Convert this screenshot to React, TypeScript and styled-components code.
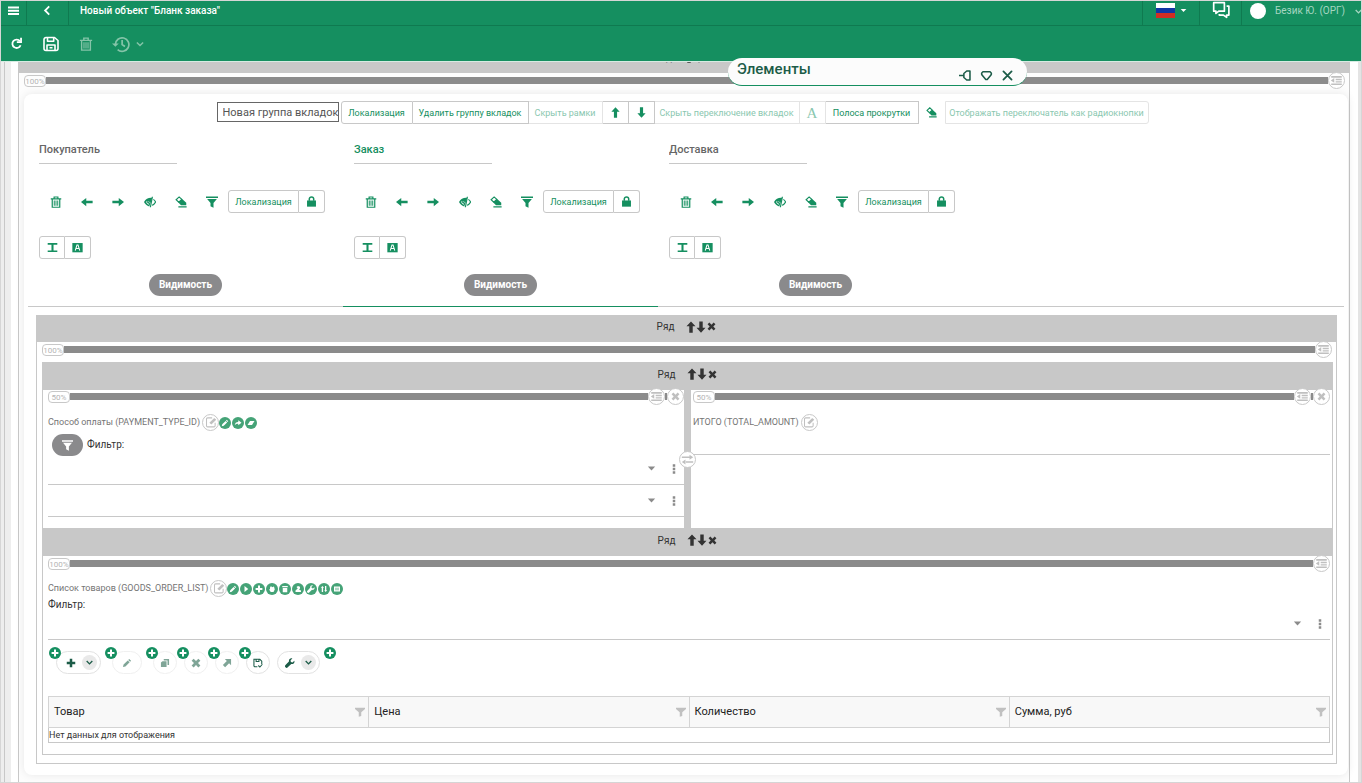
import React from "react";
import styled, { createGlobalStyle, css } from "styled-components";

const c = {
  green: "#158f60",
  greenDark: "#0f7a50",
  dot: "#45a377",
  deep: "#1c5c48",
  line: "#c8c8c8",
  bar: "#8b8b8b",
  text: "#333",
  muted: "#757575",
};

const GlobalStyle = createGlobalStyle`
  * { box-sizing: border-box; }
  body { margin: 0; background: #fff; color: ${c.text}; font: 10px/14px Roboto, "Noto Sans", sans-serif; }
  button, input { font: inherit; color: inherit; margin: 0; padding: 0; border: 0; background: none; border-radius: 0; }
  svg { display: block; flex: none; }
`;

/* ---------- icons ---------- */

const paths: Record<string, React.ReactNode> = {
  menu: <path d="M0 2h16v3H0zM0 6.800h16v3H0zM0 11.600h16v3H0z" />,
  back: <path d="M10.500 2L4.500 8l6 6" fill="none" stroke="currentColor" strokeWidth="2.600" />,
  refresh: (
    <g fill="none" stroke="currentColor" strokeWidth="2.200">
      <path d="M12.300 5.200A5.200 5.200 0 1 0 13 10.200" />
      <path d="M13.600 1v5.200H8.400" />
    </g>
  ),
  save: (
    <g fill="none" stroke="currentColor" strokeWidth="1.600" strokeLinejoin="round">
      <path d="M1 3.500a2 2 0 0 1 2-2h8.500L15 4.500v8a2 2 0 0 1-2 2H3a2 2 0 0 1-2-2z" />
      <path d="M4.500 1.500v3.700h6.200V1.500M4 14.500V9h8v5.500M6.500 11.700h3" />
    </g>
  ),
  trash: (
    <g fill="none" stroke="currentColor">
      <path d="M1 3.800h14M5.500 3.500V1.300h5v2M3 4v11h10V4" strokeWidth="1.600" />
      <path d="M5.700 6v7M8 6v7M10.300 6v7" strokeWidth="1.300" />
    </g>
  ),
  history: (
    <g fill="none" stroke="currentColor" strokeWidth="1.500">
      <path d="M3 8.500a6 6 0 1 1 2 4.500M9 4.500V8.500l2.500 1.700" />
      <path d="M0 7.500h6L3 10.500z" fill="currentColor" stroke="none" />
    </g>
  ),
  chevron: <path d="M3 5.500l5 5 5-5" fill="none" stroke="currentColor" strokeWidth="2.400" />,
  caret: <path d="M1.500 4.500h13L8 11.500z" />,
  chat: (
    <g fill="none" stroke="currentColor" strokeWidth="1.500" strokeLinejoin="round">
      <path d="M1.500 1.500h9.500v7.500H6L3.500 11V9h-2z" />
      <path d="M13 4.500h2v8h-2v2l-2.800-2H6.500v-1" />
    </g>
  ),
  pin: <path d="M0 8h6M6 5.500l3.500-3h4v11h-4L6 10.500z" fill="none" stroke="currentColor" strokeWidth="1.900" strokeLinejoin="round" />,
  heart: <path d="M3.500 3.500h9c1.500 1 1.800 2.700 1 4L8.900 13H7.100L2.500 7.500c-.8-1.300-.5-3 1-4z" fill="none" stroke="currentColor" strokeWidth="1.900" strokeLinejoin="round" />,
  close: <path d="M3 3l10 10M13 3L3 13" fill="none" stroke="currentColor" strokeWidth="2.200" strokeLinecap="round" />,
  up: <path d="M8 .500l6 6.500H10.300v8.500H5.700V7H2z" />,
  down: <path d="M8 15.500l6-6.500H10.300V.500H5.700V9H2z" />,
  left: <path d="M0 8l7-5.500v3.700h8.500v3.600H7v3.700z" />,
  right: <path d="M16 8L9 2.500v3.700H.500v3.600H9v3.700z" />,
  cross: <path d="M4.200 1L8 4.800 11.800 1 15 4.200 11.200 8l3.800 3.800-3.200 3.200L8 11.200 4.200 15 1 11.800 4.800 8 1 4.200z" />,
  eye: (
    <g>
      <path d="M0 8c2.500-4.300 6-6 11-5.500L7 14C3.800 13 1.500 11 0 8z" />
      <path d="M3.800 7a2.800 2.800 0 0 0 3 3.800M6 7.500l1.500 1" fill="none" stroke="#fff" strokeWidth="1.200" />
      <path d="M11.200 1L8.500 15M12.500 4.500C14 5.500 15 6.800 15.500 8c-1 2-2.500 3.500-4.500 4.500" fill="none" stroke="currentColor" strokeWidth="1.600" />
    </g>
  ),
  eraser: (
    <g>
      <path d="M1.500 5L5.500 1.200l3.500 3.300L5 8.300z" fill="none" stroke="currentColor" strokeWidth="1.500" />
      <path d="M4.500 8.700l5-4.700L15 9v3.300H8zM4.500 13.500h11v1.800h-11z" />
    </g>
  ),
  filter: <path d="M0 .500h16v2H0zM1.500 4h13L10 9.300v6.200L6 13.500V9.300z" />,
  funnel: <path d="M0 1h16v2L10 8.500v5.800L6 15.500V8.500L0 3z" />,
  lock: (
    <g>
      <path d="M1.500 6.500h13v9h-13z" />
      <path d="M4.800 7V4.500a3.200 3.200 0 0 1 6.400 0V7" fill="none" stroke="currentColor" strokeWidth="2.200" />
    </g>
  ),
  caption: <path d="M1 1.500h14v2.600H9.500v8.200H15v2.400H1v-2.400h5.500V4.100H1z" />,
  letter: (
    <g>
      <path d="M.500 1.500h15v13.500H.500z" />
      <path d="M4.700 12.500L7.200 4.500h1.600l2.500 8M5.800 9.500h4.400" fill="none" stroke="#fff" strokeWidth="1.500" />
    </g>
  ),
  outdent: (
    <g>
      <path d="M1.500 2.500h13v2h-13zM7 5.800h7.500v1.900H7zM7 8.800h7.500v1.700H7zM1.500 11.700h13v1.700h-13z" />
      <path d="M1 7.900l4.200-3v6z" />
    </g>
  ),
  edit: (
    <g fill="none" stroke="currentColor" strokeWidth="1.400">
      <path d="M9.500 2.500H3.500A1.500 1.500 0 0 0 2 4v9a1.500 1.500 0 0 0 1.500 1.500h8.500a1.500 1.500 0 0 0 1.500-1.500V9" />
      <path d="M6.500 9.800l6.500-6.500M7.800 10.800l6.500-6.500" strokeWidth="1.900" />
    </g>
  ),
  swap: <path d="M1 4.200h10v1.800H1zM10.500 2L15 5.100l-4.500 3.100zM5 10.100h10v1.800H5zM5.500 7.900L1 11l4.500 3.100z" />,
  pencil: <path d="M1.500 14.500l1-4L9.200 3.800l3 3-6.700 6.700zM10 3l1.500-1.500 3 3L13 6z" />,
  share: <path d="M1.500 12.500c.3-4.500 3-6.500 7-6.700V2.500L15 7.500l-6.500 5V9.300c-3-.1-5 .7-7 3.200z" />,
  rubber: <path d="M1 12l5-8h9l-5 8z" />,
  play: <path d="M5 2l7.500 6L5 14z" />,
  plus: <path d="M6 1.200h4V6h4.800v4H10v4.800H6V10H1.200V6H6z" />,
  hand: <path d="M4 5l2-3 2 2.500L12 3l1.500 6-2.500 5H5.500L2 9l2-.5z" />,
  bin: <path d="M2.500 2h11v2.500h-11zM3.500 6h9v8.500h-9z" />,
  stamp: <path d="M3 11l4.500-4L5 4l3-2 4 1.500V7l-2 2 4 2v3H3z" />,
  wrench: <path d="M14.900 4.500L12 7 9.400 6.200 8.900 3.500 11.800.800C8.800-.300 5.800 2.200 6.300 5.500L.800 11.300a2.400 2.400 0 0 0 3.600 3.600L10 9.700c3.200.6 6-1.900 4.900-5.200z" />,
  sort: <path d="M3.500 14V5.500H1.500L5 2l3 3.500H6.200V14zM10 2h2.600v8.500h2L11.300 14 8.500 10.500H10z" />,
  card: (
    <g>
      <path d="M2 3h12v10H2z" />
      <path d="M4 6.500h8M4 9.500h8" stroke={c.dot} strokeWidth="1.200" />
    </g>
  ),
  copy: <path d="M6 1.500h8.500V11H12V4H6zM1.500 7L4 5h6.500v9.500h-9z" />,
  northeast: <path d="M4.500 1.500h10v10l-3.200-3.200L5 14.600 1.400 11 7.700 4.700z" />,
  savecheck: (
    <g fill="none" stroke="currentColor" strokeWidth="1.700">
      <path d="M7 14H2.500L1.500 13V2h9.500l3 3v4.500M5 2v3.500h4.500V2M8.500 12l2.500 2.500 4-4.500" />
    </g>
  ),
  more: <path d="M6 .500h4v4H6zM6 6h4v4H6zM6 11.500h4v4H6z" />,
};

const Icon = ({ name, size = 12 }: { name: string; size?: number }) => (
  <svg width={size} height={size} viewBox="0 0 16 16" fill="currentColor" aria-hidden="true">
    {paths[name]}
  </svg>
);

/* ---------- page frame ---------- */

const Page = styled.div`
  position: relative;
  display: flex;
  flex-direction: column;
  min-height: 100vh;
  border: 1px solid #d6d6d6;
`;

const TopBar = styled.header`
  display: flex;
  height: 25px;
  background: ${c.green};
  border-bottom: 1px solid ${c.greenDark};
  color: #fff;
`;

const TopCell = styled.div<{ $w: number; $side?: "left" | "right" }>`
  display: flex;
  justify-content: center;
  align-items: center;
  width: ${(p) => p.$w}px;
  height: 24px;
  padding-bottom: 6px;
  ${(p) => (p.$side === "left" ? css`border-left` : css`border-right`)}: 1px solid ${c.greenDark};
`;

const PlainButton = styled.button`
  display: flex;
  align-items: center;
  justify-content: center;
  gap: 5px;
  cursor: pointer;
`;

const PageTitle = styled.h1`
  flex: 1;
  margin: 0;
  padding: 2px 11px 0;
  font-size: 10px;
  line-height: 16px;
  font-weight: 500;
  white-space: nowrap;
`;

const Flag = styled.span`
  width: 19px;
  height: 15px;
  background: linear-gradient(#fff 0 5px, #1037a4 5px 10px, #d12d23 10px);
`;

const UserCell = styled.button`
  display: flex;
  align-items: center;
  gap: 9px;
  width: 120px;
  height: 24px;
  padding: 0 0 4px 8px;
  border-left: 1px solid ${c.greenDark};
  color: #a5d6c0;
  white-space: nowrap;
  overflow: hidden;
`;

const Avatar = styled.span`
  flex: none;
  width: 16px;
  height: 16px;
  border-radius: 50%;
  background: #fff;
`;

const ActionBar = styled.div`
  display: flex;
  align-items: center;
  gap: 19px;
  height: 35px;
  padding-left: 8px;
  background: ${c.green};
  color: #fff;
`;

const ActionButton = styled(PlainButton)`
  min-width: 15px;
  height: 24px;
  &:disabled { color: #84c4a8; }
`;

const Workspace = styled.div`
  flex: 1;
  display: flex;
  border-top: 1px solid #d6ebe2;
`;

const Gutter = styled.div`
  width: 10px;
  background: #eee;
  border-right: 6px solid #eee;
  box-shadow: inset -1px 0 ${c.line};
`;

const RightGutter = styled.div`
  width: 3px;
  background: #e4e4e4;
`;

const Sheet = styled.main`
  flex: 1;
  min-width: 0;
  margin: 0 8px 0 7px;
  border: solid ${c.line};
  border-width: 0 1px;
  background: #fdfdfd;
`;

/* ---------- layout editor parts ---------- */

const RowHead = styled.div<{ $h?: number }>`
  display: flex;
  align-items: center;
  justify-content: center;
  gap: 12px;
  height: ${(p) => p.$h ?? 28}px;
  padding-bottom: 3px;
  background: ${c.line};
`;

const ScrolledHead = styled.div`
  display: flex;
  flex-direction: column;
  justify-content: flex-end;
  height: 11px;
  overflow: hidden;
  & > div { flex: none; }
`;

const HeadTools = styled.span`
  display: flex;
  padding-bottom: 1px;
  & > button { width: 10px; }
`;

const RowHeader = ({ h }: { h?: number }) => (
  <RowHead $h={h}>
    <span>Ряд</span>
    <HeadTools>
      <PlainButton aria-label="Вверх"><Icon name="up" /></PlainButton>
      <PlainButton aria-label="Вниз"><Icon name="down" /></PlainButton>
      <PlainButton aria-label="Удалить"><Icon name="cross" size={9} /></PlainButton>
    </HeadTools>
  </RowHead>
);

const TrackLine = styled.div<{ $h: number }>`
  display: flex;
  align-items: center;
  height: ${(p) => p.$h}px;
`;

const Percent = styled.span`
  flex: none;
  width: 22px;
  height: 12px;
  border: 1px solid ${c.line};
  border-radius: 4px;
  color: #b4b4b4;
  font-size: 8px;
  line-height: 11px;
  text-align: center;
`;

const Bar = styled.span<{ $w?: number }>`
  flex: ${(p) => (p.$w ? `0 0 ${p.$w}px` : "1")};
  height: 7px;
  background: ${c.bar};
`;

const RoundButton = styled.button`
  display: flex;
  flex: none;
  align-items: center;
  justify-content: center;
  width: 17px;
  height: 17px;
  border: 1px solid ${c.line};
  border-radius: 50%;
  background: #fff;
  color: #c0c0c0;
`;

const Track = ({ value, h = 15, removable }: { value: string; h?: number; removable?: boolean }) => (
  <TrackLine $h={h}>
    <Percent>{value}</Percent>
    <Bar />
    <RoundButton aria-label="Отступ"><Icon name="outdent" size={13} /></RoundButton>
    {removable && (
      <>
        <Bar $w={2} />
        <RoundButton aria-label="Удалить"><Icon name="cross" size={9} /></RoundButton>
      </>
    )}
  </TrackLine>
);

const Inset = styled.div`
  padding: 0 4px 0 5px;
`;

const Card = styled.section`
  margin: 6px 1px 7px 5px;
  padding-bottom: 11px;
  border-radius: 8px;
  background: #fff;
  box-shadow: 0 0 10px rgba(0, 0, 0, 0.09);
`;

const GroupTools = styled.div`
  display: flex;
  justify-content: center;
  height: 30px;
  padding: 7px 7px 0 0;
`;

const GroupName = styled.input`
  width: 122px;
  height: 20px;
  margin: 1px 2px 0 0;
  padding: 0 0 0 5px;
  border: 1px solid #666;
  color: #555;
  font-size: 11px;
`;

const ToolButton = styled.button<{ $w?: number }>`
  display: flex;
  align-items: center;
  justify-content: center;
  width: ${(p) => p.$w ?? 26}px;
  height: 23px;
  border: 1px solid ${c.line};
  color: ${c.green};
  font-size: 9px;
  white-space: nowrap;
  cursor: pointer;
  & + & { border-left: 0; }
  &:first-of-type { border-radius: 3px 0 0 3px; }
  &:last-of-type { border-radius: 0 3px 3px 0; }
  &:disabled { border-color: #e4e4e4; color: #8ac7af; cursor: default; }
`;

const SerifA = styled.span`
  font: 15px/20px "Liberation Serif", serif;
`;

const BareTool = styled(PlainButton)<{ $w: number }>`
  width: ${(p) => p.$w}px;
  height: 23px;
  color: ${c.green};
`;

const Tabs = styled.div`
  display: flex;
  margin: 18px 4px 0;
`;

const Tab = styled.div<{ $active?: boolean }>`
  display: flex;
  flex: 0 0 315px;
  flex-direction: column;
  padding: 0 11px 10px;
  border-bottom: 1px solid ${(p) => (p.$active ? c.green : c.line)};
`;

const TabRest = styled.div`
  flex: 1;
  border-bottom: 1px solid ${c.line};
`;

const TabName = styled.input<{ $active?: boolean }>`
  width: 138px;
  height: 22px;
  padding-bottom: 6px;
  border-bottom: 1px solid ${c.line};
  color: ${(p) => (p.$active ? c.green : "#666")};
  font-size: 11px;
  font-weight: 500;
`;

const TabTools = styled.div<{ $gap?: number }>`
  display: flex;
  margin-top: ${(p) => p.$gap ?? 0}px;
`;

const IconRun = styled.div`
  display: grid;
  grid-template-columns: repeat(6, 1fr);
  width: 188px;
  margin-left: 1px;
  & > button { width: auto; }
`;

const Pill = styled.button`
  display: flex;
  align-items: center;
  align-self: center;
  justify-content: center;
  height: 22px;
  padding: 0 10px;
  border-radius: 11px;
  background: #8a8a8c;
  color: #fff;
  font-size: 10px;
  font-weight: 700;
`;

const VisibilityPill = styled(Pill)`
  width: 73px;
  margin-top: 15px;
`;

const OuterBox = styled.div`
  margin: 8px 11px 0 12px;
  padding-bottom: 8px;
  border: solid ${c.line};
  border-width: 0 1px 1px;
`;

const InnerBox = styled.div`
  margin: 5px 3px 0 5px;
  border: solid ${c.line};
  border-width: 0 1px 1px;
`;

const Columns = styled.div`
  display: grid;
  grid-template-columns: 1fr 7px 1fr;
`;

const Pane = styled.div<{ $second?: boolean }>`
  min-width: 0;
  padding: ${(p) => (p.$second ? "0 2px 11px 2px" : "0 0 11px 5px")};
`;

const Splitter = styled.div`
  display: flex;
  align-items: center;
  justify-content: center;
  background: ${c.line};
`;

const FieldLabel = styled.div<{ $gap?: number }>`
  display: flex;
  align-items: center;
  height: 18px;
  margin-top: ${(p) => p.$gap ?? 8}px;
  color: ${c.muted};
  font-size: 9px;
  & > label { margin-right: 2px; white-space: nowrap; }
`;

const Dots = styled.span`
  display: flex;
  gap: 1px;
  padding-top: 2px;
`;

const Dot = styled.button<{ $strong?: boolean }>`
  display: flex;
  flex: none;
  align-items: center;
  justify-content: center;
  width: 12px;
  height: 12px;
  border-radius: 50%;
  background: ${(p) => (p.$strong ? c.green : c.dot)};
  color: #fff;
`;

const FilterRow = styled.div`
  display: flex;
  align-items: center;
  gap: 4px;
  height: 22px;
  margin: 3px 0 1px 4px;
`;

const FilterLabel = styled.label`
  display: block;
  height: 15px;
  line-height: 15px;
`;

const Combo = styled.div<{ $gap?: number }>`
  display: flex;
  align-items: center;
  gap: 13px;
  height: 28px;
  margin-top: ${(p) => p.$gap ?? 0}px;
  padding: 0 5px 4px 0;
  border-bottom: 1px solid ${c.line};
  color: #8b8b8b;
  & > input { flex: 1; min-width: 0; outline: 0; }
`;

const ComboField = ({ id, label, gap }: { id?: string; label: string; gap?: number }) => (
  <Combo $gap={gap}>
    <input id={id} aria-label={label} />
    <PlainButton aria-label="Открыть список"><Icon name="caret" size={9} /></PlainButton>
    <PlainButton aria-label="Ещё"><Icon name="more" size={10} /></PlainButton>
  </Combo>
);

const TotalInput = styled.input`
  display: block;
  width: 100%;
  height: 24px;
  border-bottom: 1px solid ${c.line};
`;

const Section = styled.div`
  padding: 0 2px 11px 5px;
`;

const GridTools = styled.div`
  display: flex;
  gap: 7px;
  margin: 11px 0 22px 8px;
`;

const GridTool = styled.div<{ $w: number; $apart?: boolean; $faded?: boolean; $menu?: boolean }>`
  position: relative;
  display: flex;
  align-items: center;
  justify-content: ${(p) => (p.$menu ? "flex-end" : "center")};
  gap: 6px;
  width: ${(p) => p.$w}px;
  height: 23px;
  margin-right: ${(p) => (p.$apart ? 4 : 0)}px;
  padding-right: ${(p) => (p.$menu ? 3 : 0)}px;
  border: 1px solid ${(p) => (p.$faded ? "#f0f0f0" : "#e2e2e2")};
  border-radius: 12px;
  color: ${(p) => (p.$faded ? "#7fa597" : c.deep)};
`;

const AddBadge = styled(Dot)`
  position: absolute;
  left: -8px;
  top: -5px;
`;

const LoneAdd = styled(Dot)`
  margin: -4px 0 0 -3px;
`;

const MoreCircle = styled.button`
  display: flex;
  align-items: center;
  justify-content: center;
  width: 15px;
  height: 15px;
  border-radius: 50%;
  background: #e9e9e9;
`;

const Table = styled.table`
  width: 100%;
  border-collapse: collapse;
  table-layout: fixed;
  border: 1px solid ${c.line};
  th {
    height: 31px;
    padding: 0 3px 0 5px;
    border: 1px solid #d4d4d4;
    background: #f8f8f8;
    font-size: 11px;
    font-weight: 400;
    text-align: left;
    color: #222;
  }
  td { height: 15px; padding: 0; line-height: 14px; font-size: 9px; }
`;

const HeadCell = styled.span`
  display: flex;
  align-items: center;
  justify-content: space-between;
  & > button { color: #c0c0c0; }
`;

const Palette = styled.aside`
  position: absolute;
  top: 57px;
  left: 727px;
  display: flex;
  width: 299px;
  height: 28px;
  padding: 2px 13px 0 9px;
  border-bottom: 1px solid ${c.green};
  border-radius: 14px;
  background: #fcfcfc;
  color: ${c.deep};
  h2 { flex: 1; margin: 0; font-size: 15px; line-height: 18px; font-weight: 500; }
`;

const PaletteTools = styled.div`
  display: flex;
  align-items: center;
  gap: 8px;
  padding-top: 5px;
`;

/* ---------- content ---------- */

const tabs = [
  { name: "Покупатель" },
  { name: "Заказ", active: true },
  { name: "Доставка" },
];

type Action = { icon: string; label: string };

const tabActions: Action[] = [
  { icon: "trash", label: "Удалить вкладку" },
  { icon: "left", label: "Влево" },
  { icon: "right", label: "Вправо" },
  { icon: "eye", label: "Скрыть" },
  { icon: "eraser", label: "Очистить" },
  { icon: "filter", label: "Фильтр" },
];

const paymentActions: Action[] = [
  { icon: "pencil", label: "Редактировать" },
  { icon: "share", label: "Перейти" },
  { icon: "rubber", label: "Очистить" },
];

const goodsActions: Action[] = [
  { icon: "pencil", label: "Редактировать" },
  { icon: "play", label: "Запустить" },
  { icon: "plus", label: "Добавить" },
  { icon: "hand", label: "Выбрать" },
  { icon: "bin", label: "Удалить" },
  { icon: "stamp", label: "Отметить" },
  { icon: "wrench", label: "Настроить" },
  { icon: "sort", label: "Сортировать" },
  { icon: "card", label: "Карточка" },
];

const gridTools = [
  { icon: "plus", label: "Создать", w: 45, apart: true, menu: true, add: true },
  { icon: "pencil", label: "Изменить", w: 30, apart: true, faded: true, add: true },
  { icon: "copy", label: "Копировать", w: 24, faded: true, add: true },
  { icon: "cross", label: "Удалить", w: 24, faded: true, add: true },
  { icon: "northeast", label: "Открыть", w: 24, faded: true, add: true },
  { icon: "savecheck", label: "Сохранить", w: 24, add: true },
  { icon: "wrench", label: "Настройки", w: 43, menu: true },
];

const tableColumns = ["Товар", "Цена", "Количество", "Сумма, руб"];

const DotRow = ({ actions }: { actions: Action[] }) => (
  <Dots>
    {actions.map((a) => (
      <Dot key={a.icon} aria-label={a.label}><Icon name={a.icon} size={8} /></Dot>
    ))}
  </Dots>
);

export default function App() {
  return (
    <Page>
      <GlobalStyle />
      <TopBar>
        <TopCell $w={26}>
          <PlainButton aria-label="Меню"><Icon name="menu" size={11} /></PlainButton>
        </TopCell>
        <TopCell $w={42}>
          <PlainButton aria-label="Назад"><Icon name="back" size={11} /></PlainButton>
        </TopCell>
        <PageTitle>Новый объект "Бланк заказа"</PageTitle>
        <TopCell $w={57} $side="left">
          <PlainButton aria-label="Язык"><Flag /><Icon name="caret" size={7} /></PlainButton>
        </TopCell>
        <TopCell $w={42} $side="left">
          <PlainButton aria-label="Сообщения"><Icon name="chat" size={18} /></PlainButton>
        </TopCell>
        <UserCell><Avatar />Безик Ю. (ОРГ)<Icon name="chevron" size={9} /></UserCell>
      </TopBar>
      <ActionBar>
        <ActionButton aria-label="Обновить"><Icon name="refresh" size={13} /></ActionButton>
        <ActionButton aria-label="Сохранить"><Icon name="save" size={16} /></ActionButton>
        <ActionButton aria-label="Удалить" disabled><Icon name="trash" size={14} /></ActionButton>
        <ActionButton aria-label="История" disabled><Icon name="history" size={18} /><Icon name="chevron" size={10} /></ActionButton>
      </ActionBar>

      <Workspace>
        <Gutter />
        <Sheet>
          <ScrolledHead><RowHeader /></ScrolledHead>
          <Inset><Track value="100%" /></Inset>
          <Card>
            <GroupTools>
              <GroupName aria-label="Название группы" defaultValue="Новая группа вкладок" />
              <ToolButton $w={72}>Локализация</ToolButton>
              <ToolButton $w={116}>Удалить группу вкладок</ToolButton>
              <ToolButton $w={74} disabled>Скрыть рамки</ToolButton>
              <ToolButton aria-label="Вверх"><Icon name="up" size={11} /></ToolButton>
              <ToolButton aria-label="Вниз"><Icon name="down" size={11} /></ToolButton>
              <ToolButton $w={145} disabled>Скрыть переключение вкладок</ToolButton>
              <ToolButton disabled><SerifA>A</SerifA></ToolButton>
              <ToolButton $w={93}>Полоса прокрутки</ToolButton>
              <BareTool $w={26} aria-label="Очистить"><Icon name="eraser" size={11} /></BareTool>
              <ToolButton $w={204} disabled>Отображать переключатель как радиокнопки</ToolButton>
            </GroupTools>

            <Tabs>
              {tabs.map((t) => (
                <Tab key={t.name} $active={t.active}>
                  <TabName $active={t.active} aria-label="Название вкладки" defaultValue={t.name} />
                  <TabTools $gap={26}>
                    <IconRun>
                      {tabActions.map((a) => (
                        <BareTool key={a.icon} $w={31} aria-label={a.label}><Icon name={a.icon} /></BareTool>
                      ))}
                    </IconRun>
                    <TabTools>
                      <ToolButton $w={71}>Локализация</ToolButton>
                      <ToolButton aria-label="Доступ"><Icon name="lock" size={11} /></ToolButton>
                    </TabTools>
                  </TabTools>
                  <TabTools $gap={23}>
                    <ToolButton aria-label="Подпись"><Icon name="caption" size={11} /></ToolButton>
                    <ToolButton aria-label="Шрифт"><Icon name="letter" size={11} /></ToolButton>
                  </TabTools>
                  <VisibilityPill>Видимость</VisibilityPill>
                </Tab>
              ))}
              <TabRest />
            </Tabs>

            <OuterBox>
              <RowHeader h={27} />
              <Inset><Track value="100%" /></Inset>
              <InnerBox>
                <RowHeader />
                <Columns>
                  <Pane>
                    <Track value="50%" h={13} removable />
                    <FieldLabel $gap={10}>
                      <label htmlFor="payment">Способ оплаты (PAYMENT_TYPE_ID)</label>
                      <RoundButton aria-label="Изменить"><Icon name="edit" size={12} /></RoundButton>
                      <DotRow actions={paymentActions} />
                    </FieldLabel>
                    <FilterRow>
                      <Pill aria-label="Фильтр"><Icon name="filter" size={11} /></Pill>
                      <label htmlFor="payment-filter">Фильтр:</label>
                    </FilterRow>
                    <ComboField id="payment-filter" label="Фильтр" />
                    <ComboField id="payment" label="Способ оплаты" gap={4} />
                  </Pane>
                  <Splitter>
                    <RoundButton aria-label="Поменять местами"><Icon name="swap" size={13} /></RoundButton>
                  </Splitter>
                  <Pane $second>
                    <Track value="50%" h={13} removable />
                    <FieldLabel $gap={10}>
                      <label htmlFor="total">ИТОГО (TOTAL_AMOUNT)</label>
                      <RoundButton aria-label="Изменить"><Icon name="edit" size={12} /></RoundButton>
                    </FieldLabel>
                    <TotalInput id="total" />
                  </Pane>
                </Columns>
                <RowHeader />
                <Section>
                  <Track value="100%" />
                  <FieldLabel>
                    <label htmlFor="goods-filter">Список товаров (GOODS_ORDER_LIST)</label>
                    <RoundButton aria-label="Изменить"><Icon name="edit" size={12} /></RoundButton>
                    <DotRow actions={goodsActions} />
                  </FieldLabel>
                  <FilterLabel htmlFor="goods-filter">Фильтр:</FilterLabel>
                  <ComboField id="goods-filter" label="Фильтр" />
                  <GridTools>
                    {gridTools.map((t) => (
                      <GridTool key={t.icon} $w={t.w} $apart={t.apart} $faded={t.faded} $menu={t.menu}>
                        {t.add && <AddBadge $strong aria-label="Добавить"><Icon name="plus" size={8} /></AddBadge>}
                        <PlainButton aria-label={t.label}><Icon name={t.icon} size={10} /></PlainButton>
                        {t.menu && <MoreCircle aria-label="Ещё"><Icon name="chevron" size={9} /></MoreCircle>}
                      </GridTool>
                    ))}
                    <LoneAdd $strong aria-label="Добавить"><Icon name="plus" size={8} /></LoneAdd>
                  </GridTools>
                  <Table>
                    <thead>
                      <tr>
                        {tableColumns.map((name) => (
                          <th key={name}>
                            <HeadCell>
                              {name}
                              <PlainButton aria-label="Фильтр"><Icon name="funnel" size={10} /></PlainButton>
                            </HeadCell>
                          </th>
                        ))}
                      </tr>
                    </thead>
                    <tbody>
                      <tr><td colSpan={4}>Нет данных для отображения</td></tr>
                    </tbody>
                  </Table>
                </Section>
              </InnerBox>
            </OuterBox>
          </Card>
        </Sheet>
        <RightGutter />
      </Workspace>

      <Palette>
        <h2>Элементы</h2>
        <PaletteTools>
          <PlainButton aria-label="Закрепить"><Icon name="pin" size={13} /></PlainButton>
          <PlainButton aria-label="Свернуть"><Icon name="heart" size={13} /></PlainButton>
          <PlainButton aria-label="Закрыть"><Icon name="close" size={13} /></PlainButton>
        </PaletteTools>
      </Palette>
    </Page>
  );
}
